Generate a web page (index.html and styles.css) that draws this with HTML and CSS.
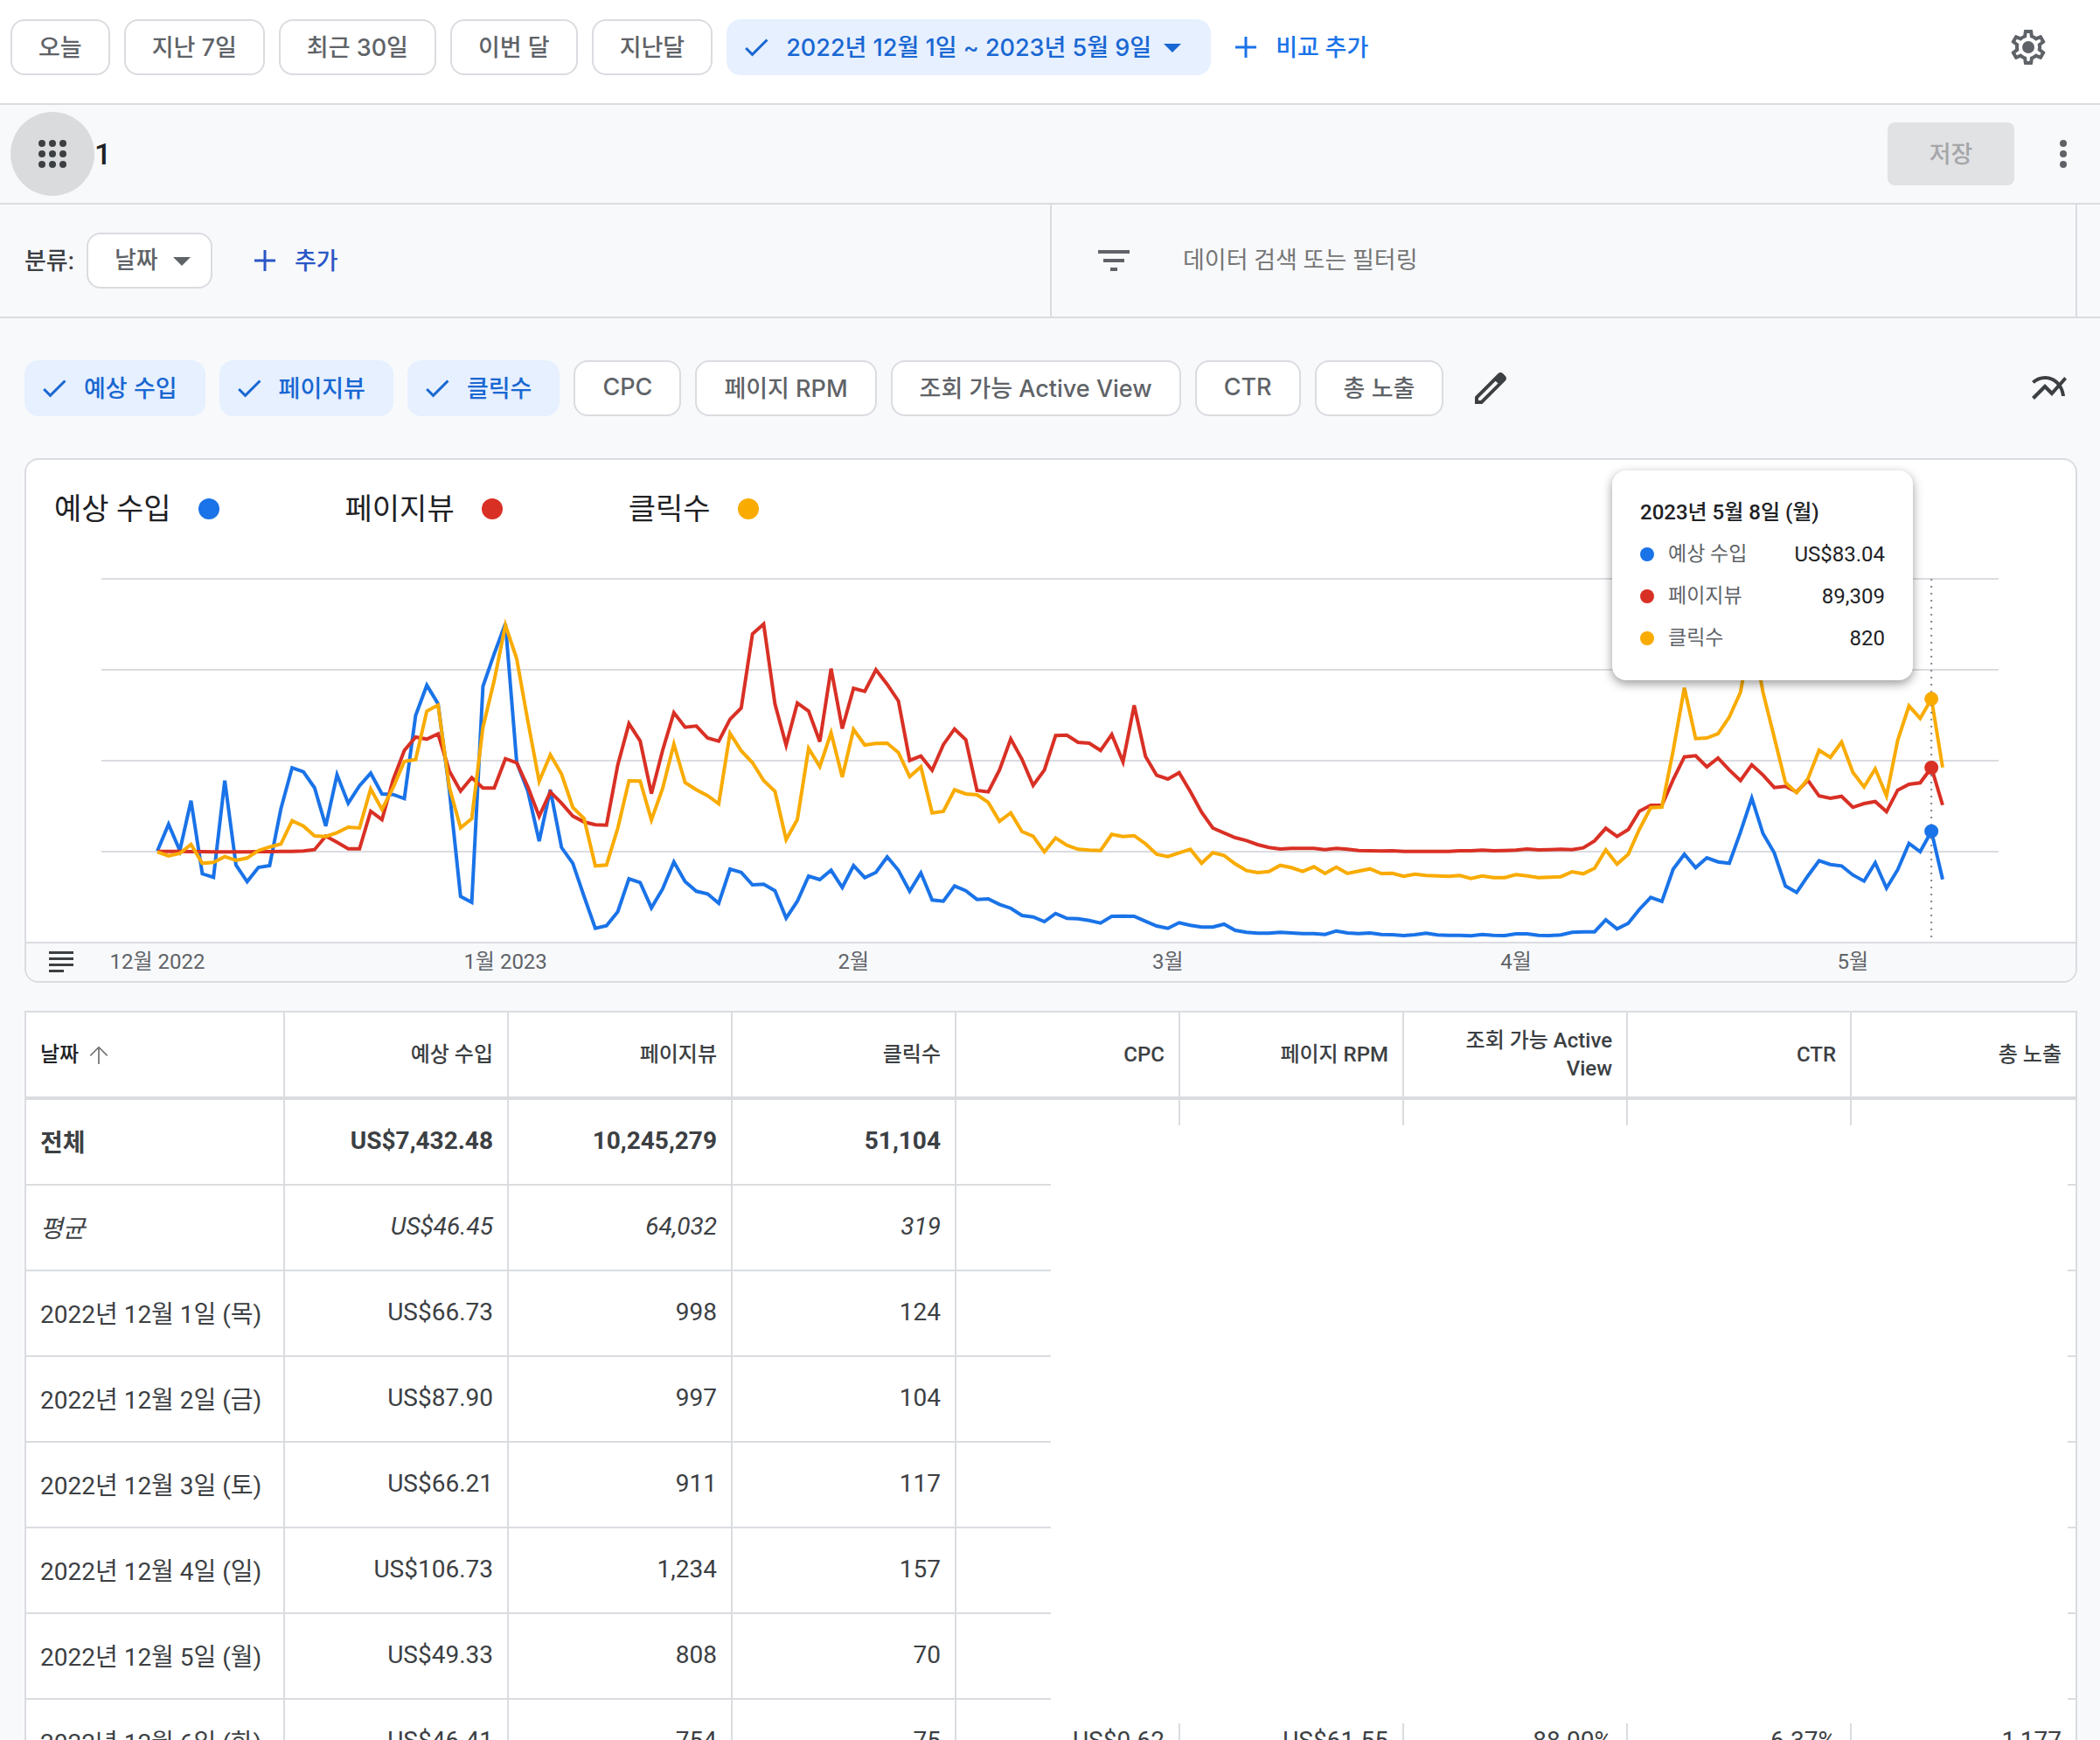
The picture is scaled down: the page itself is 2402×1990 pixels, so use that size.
FILE: index.html
```html
<!DOCTYPE html>
<html lang="ko">
<head>
  <meta charset="utf-8">
  <title>보고서</title>
  <link rel="stylesheet" href="styles.css">
</head>
<body>

  <!-- shared icons -->
  <svg class="icon-defs" aria-hidden="true">
    <symbol id="check" viewBox="0 0 24 24"><path d="M9 16.17L4.83 12l-1.42 1.41L9 19 21 7l-1.41-1.41z"/></symbol>
    <symbol id="drop" viewBox="0 0 24 24"><path d="M7 10l5 5 5-5z"/></symbol>
    <symbol id="plus" viewBox="0 0 24 24"><path d="M10.5 0h3v10.5H24v3H13.5V24h-3V13.5H0v-3h10.5z"/></symbol>
  </svg>

  <header class="date-bar">
    <button class="chip">오늘</button>
    <button class="chip">지난 7일</button>
    <button class="chip">최근 30일</button>
    <button class="chip">이번 달</button>
    <button class="chip">지난달</button>
    <button class="chip selected range" aria-haspopup="dialog">
      <svg class="icon-check"><use href="#check"/></svg>2022년 12월 1일 ~ 2023년 5월 9일<svg class="icon"><use href="#drop"/></svg>
    </button>
    <button class="text-button compare"><svg class="icon-plus"><use href="#plus"/></svg>비교 추가</button>
    <button class="icon-button push" aria-label="설정">
      <svg class="icon" viewBox="0 0 24 24"><path d="M19.43 12.98c.04-.32.07-.64.07-.98 0-.34-.03-.66-.07-.98l2.11-1.65c.19-.15.24-.42.12-.64l-2-3.46c-.09-.16-.26-.25-.44-.25-.06 0-.12.01-.17.03l-2.49 1c-.52-.4-1.08-.73-1.69-.98l-.38-2.65C14.46 2.18 14.25 2 14 2h-4c-.25 0-.46.18-.49.42l-.38 2.65c-.61.25-1.17.59-1.69.98l-2.49-1c-.06-.02-.12-.03-.18-.03-.17 0-.34.09-.43.25l-2 3.46c-.13.22-.07.49.12.64l2.11 1.65c-.04.32-.07.65-.07.98 0 .33.03.66.07.98l-2.11 1.65c-.19.15-.24.42-.12.64l2 3.46c.09.16.26.25.44.25.06 0 .12-.01.17-.03l2.49-1c.52.4 1.08.73 1.69.98l.38 2.65c.03.24.24.42.49.42h4c.25 0 .46-.18.49-.42l.38-2.65c.61-.25 1.17-.59 1.69-.98l2.49 1c.06.02.12.03.18.03.17 0 .34-.09.43-.25l2-3.46c.12-.22.07-.49-.12-.64l-2.11-1.65zm-1.98-1.71c.04.31.05.52.05.73 0 .21-.02.43-.05.73l-.14 1.13.89.7 1.08.84-.7 1.21-1.27-.51-1.04-.42-.9.68c-.43.32-.84.56-1.25.73l-1.06.43-.16 1.13-.2 1.35h-1.4l-.19-1.35-.16-1.13-1.06-.43c-.43-.18-.83-.41-1.23-.71l-.91-.7-1.06.43-1.27.51-.7-1.21 1.08-.84.89-.7-.14-1.13c-.03-.31-.05-.54-.05-.74s.02-.43.05-.73l.14-1.13-.89-.7-1.08-.84.7-1.21 1.27.51 1.04.42.9-.68c.43-.32.84-.56 1.25-.73l1.06-.43.16-1.13.2-1.35h1.39l.19 1.35.16 1.13 1.06.43c.43.18.83.41 1.23.71l.91.7 1.06-.43 1.27-.51.7 1.21-1.07.85-.89.7.14 1.13z"/><circle cx="12" cy="12" r="3.5"/></svg>
    </button>
  </header>

  <div class="title-bar">
    <button class="apps-button" aria-label="보고서 목록">
      <svg class="icon" viewBox="0 0 24 24">
        <circle cx="6" cy="6" r="2"/><circle cx="12" cy="6" r="2"/><circle cx="18" cy="6" r="2"/>
        <circle cx="6" cy="12" r="2"/><circle cx="12" cy="12" r="2"/><circle cx="18" cy="12" r="2"/>
        <circle cx="6" cy="18" r="2"/><circle cx="12" cy="18" r="2"/><circle cx="18" cy="18" r="2"/>
      </svg>
    </button>
    <h1>1</h1>
    <button class="save-button push" disabled>저장</button>
    <button class="icon-button" aria-label="더보기">
      <svg class="icon" viewBox="0 0 24 24"><circle cx="12" cy="6" r="2"/><circle cx="12" cy="12" r="2"/><circle cx="12" cy="18" r="2"/></svg>
    </button>
  </div>

  <div class="filter-bar">
    <div class="breakdown">
      <label for="breakdown">분류:</label>
      <div class="select">
        <select id="breakdown" class="chip"><option>날짜</option></select>
        <svg class="icon"><use href="#drop"/></svg>
      </div>
      <button class="text-button add"><svg class="icon-plus"><use href="#plus"/></svg>추가</button>
    </div>
    <div class="search">
      <svg class="icon" viewBox="0 0 24 24"><path d="M10 18h4v-2h-4v2zM3 6v2h18V6H3zm3 7h12v-2H6v2z"/></svg>
      <input type="text" aria-label="데이터 검색 또는 필터링" placeholder="데이터 검색 또는 필터링">
    </div>
  </div>

  <main>
    <div class="metrics">
      <button class="chip selected" aria-pressed="true"><svg class="icon-check"><use href="#check"/></svg>예상 수입</button>
      <button class="chip selected" aria-pressed="true"><svg class="icon-check"><use href="#check"/></svg>페이지뷰</button>
      <button class="chip selected" aria-pressed="true"><svg class="icon-check"><use href="#check"/></svg>클릭수</button>
      <button class="chip">CPC</button>
      <button class="chip">페이지 RPM</button>
      <button class="chip">조회 가능 Active View</button>
      <button class="chip">CTR</button>
      <button class="chip">총 노출</button>
      <button class="icon-button edit" aria-label="측정항목 수정">
        <svg class="icon" viewBox="0 0 24 24"><path d="M20.41 4.94l-1.35-1.35c-.78-.78-2.05-.78-2.83 0L3 16.82V21h4.18L20.41 7.77c.79-.78.79-2.05 0-2.83zm-14 14.12L5 19v-1.36l9.82-9.82 1.41 1.41-9.82 9.83z"/></svg>
      </button>
      <button class="icon-button push" aria-label="차트 유형">
        <svg class="icon" viewBox="0 0 24 24"><path d="M22 6.92l-1.41-1.41-2.85 3.21C15.68 6.4 12.83 5 9.61 5 6.72 5 4.07 6.16 2 8l1.42 1.42C5.12 7.93 7.27 7 9.61 7c2.74 0 5.09 1.26 6.77 3.24l-2.88 3.24-4-4L2 16.99l1.5 1.5 6-6.01 4 4 4.05-4.55c.75 1.35 1.25 2.9 1.44 4.55H21c-.22-2.3-.95-4.39-2.04-6.14L22 6.92z"/></svg>
      </button>
    </div>

    <section class="chart-card">
      <div class="legend">
        <span>예상 수입<i class="dot blue"></i></span>
        <span>페이지뷰<i class="dot red"></i></span>
        <span>클릭수<i class="dot yellow"></i></span>
      </div>
      <svg id="chart"></svg>
      <button class="notes-button" aria-label="메모">
        <svg width="28" height="24" viewBox="0 0 28 24"><path d="M0 0h28v3H0zM0 7h28v3H0zM0 14h28v3H0zM0 21h17v3H0z"/></svg>
      </button>
      <div class="tooltip">
        <strong>2023년 5월 8일 (월)</strong>
        <p><i class="dot blue"></i>예상 수입<b>US$83.04</b></p>
        <p><i class="dot red"></i>페이지뷰<b>89,309</b></p>
        <p><i class="dot yellow"></i>클릭수<b>820</b></p>
      </div>
    </section>

    <div class="table-wrap">
      <table>
        <thead>
          <tr>
            <th>날짜<svg class="icon-sort" viewBox="0 0 24 24"><path d="M4.7 12.7l-.9-.9L12 3.600l8.200 8.200-.9.9-6.600-6.600V20h-1.400V6.100z"/></svg></th>
            <th>예상 수입</th>
            <th>페이지뷰</th>
            <th>클릭수</th>
            <th>CPC</th>
            <th>페이지 RPM</th>
            <th>조회 가능 Active View</th>
            <th>CTR</th>
            <th>총 노출</th>
          </tr>
        </thead>
        <tbody>
          <tr class="total"><td>전체</td><td>US$7,432.48</td><td>10,245,279</td><td>51,104</td><td></td><td></td><td></td><td></td><td></td></tr>
          <tr class="average"><td>평균</td><td>US$46.45</td><td>64,032</td><td>319</td><td></td><td></td><td></td><td></td><td></td></tr>
          <tr><td>2022년 12월 1일 (목)</td><td>US$66.73</td><td>998</td><td>124</td><td></td><td></td><td></td><td></td><td></td></tr>
          <tr><td>2022년 12월 2일 (금)</td><td>US$87.90</td><td>997</td><td>104</td><td></td><td></td><td></td><td></td><td></td></tr>
          <tr><td>2022년 12월 3일 (토)</td><td>US$66.21</td><td>911</td><td>117</td><td></td><td></td><td></td><td></td><td></td></tr>
          <tr><td>2022년 12월 4일 (일)</td><td>US$106.73</td><td>1,234</td><td>157</td><td></td><td></td><td></td><td></td><td></td></tr>
          <tr><td>2022년 12월 5일 (월)</td><td>US$49.33</td><td>808</td><td>70</td><td></td><td></td><td></td><td></td><td></td></tr>
          <tr><td>2022년 12월 6일 (화)</td><td>US$46.41</td><td>754</td><td>75</td><td>US$0.62</td><td>US$61.55</td><td>88.00%</td><td>6.37%</td><td>1,177</td></tr>
        </tbody>
      </table>
      <div class="table-mask"></div>
    </div>
  </main>

  <script>
    // one value per day, measured down from the top of the chart, 3 units to a pixel
    const series = [
      {
        color: '#1a73e8',
        data: [
          1000, 908, 998, 827, 1078, 1090, 758, 1048, 1105, 1056, 1050, 855, 714, 728, 783, 914,
          738, 836, 776, 733, 804, 806, 820, 535, 431, 495, 790, 1156, 1176, 435, 323,
          220, 695, 795, 966, 790, 988, 1042, 1155, 1265, 1256, 1208, 1095, 1108, 1195, 1130, 1037,
          1105, 1138, 1147, 1179, 1062, 1073, 1116, 1114, 1136, 1230, 1172, 1086, 1098, 1066, 1125,
          1050, 1091, 1073, 1020, 1066, 1138, 1075, 1168, 1172, 1120, 1136, 1166, 1164, 1183, 1196,
          1221, 1226, 1242, 1214, 1231, 1232, 1238, 1247, 1224, 1223, 1224, 1241, 1257,
          1265, 1246, 1255, 1261, 1261, 1251, 1272, 1279, 1282, 1282, 1279, 1281, 1283, 1283, 1286,
          1274, 1281, 1283, 1281, 1286, 1287, 1290, 1287, 1282, 1288, 1289, 1289, 1291, 1286, 1289, 1290,
          1284, 1284, 1289, 1290, 1288, 1279, 1277, 1277, 1236, 1267, 1248, 1200, 1159, 1173, 1062,
          1011, 1057, 1023, 1037, 1042, 935, 818, 940, 1006, 1120, 1142, 1085, 1033, 1046, 1051,
          1082, 1103, 1040, 1127, 1064, 974, 1002, 932, 1097
        ]
      },
      {
        color: '#d93025',
        data: [
          1001, 1001, 1001, 1002, 1002, 1003, 1003, 1003, 1003, 1002, 1002, 1001, 1001, 1000, 995, 949,
          970, 992, 992, 863, 892, 755, 655, 609, 616, 598, 725, 794, 748, 784, 784,
          683, 697, 780, 881, 797, 836, 880, 900, 910, 911, 705, 563, 622, 803, 655, 525,
          575, 571, 612, 623, 548, 509, 255, 221, 495, 637, 492, 520, 625, 374, 580,
          442, 452, 378, 428, 485, 689, 674, 723, 635, 581, 618, 792, 797, 722, 615,
          685, 775, 722, 604, 602, 627, 630, 655, 600, 694, 500, 675, 740,
          753, 731, 796, 867, 921, 938, 954, 964, 978, 988, 993, 991, 991, 991, 995,
          991, 994, 998, 999, 1000, 999, 1001, 1001, 1001, 1001, 1001, 999, 999, 997, 999, 998,
          997, 993, 996, 995, 994, 995, 989, 965, 922, 950, 926, 863, 843, 843, 755,
          677, 673, 711, 681, 722, 758, 704, 739, 782, 778, 797, 757, 811, 819, 812,
          850, 837, 830, 865, 791, 771, 766, 714, 842
        ]
      },
      {
        color: '#f9ab00',
        data: [
          1003, 1017, 1008, 977, 1042, 1039, 1019, 1032, 1024, 998, 986, 976, 896, 914, 948, 950,
          937, 918, 921, 787, 857, 782, 692, 686, 520, 499, 780, 920, 889, 575, 415,
          225, 340, 555, 761, 670, 736, 850, 888, 1051, 1048, 922, 759, 760, 893, 785, 633,
          765, 790, 810, 838, 596, 656, 697, 758, 795, 961, 892, 648, 710, 594, 746,
          583, 636, 631, 630, 662, 745, 711, 869, 864, 790, 804, 807, 833, 898, 869,
          933, 949, 1003, 955, 980, 994, 997, 998, 943, 950, 947, 975, 1011,
          1019, 1006, 994, 1042, 1006, 1015, 1044, 1067, 1074, 1070, 1049, 1057, 1070, 1054, 1077,
          1055, 1077, 1069, 1061, 1077, 1076, 1087, 1079, 1084, 1085, 1087, 1084, 1094, 1085, 1091, 1091,
          1081, 1085, 1091, 1090, 1088, 1071, 1078, 1059, 996, 1045, 1011, 925, 851, 849, 655,
          440, 614, 612, 597, 540, 455, 240, 455, 610, 765, 800, 752, 654, 679, 626,
          730, 780, 718, 811, 620, 502, 545, 478, 713
        ]
      }
    ];
    const months = [[0, '12월 2022'], [31, '1월 2023'], [62, '2월'], [90, '3월'], [121, '4월'], [151, '5월']];
    const hovered = 158;
    const chart = document.getElementById('chart');

    function drawChart() {
      const width = chart.clientWidth;
      const x = i => 150 + i * (width - 302) / 159;
      let out = `<rect class="axis" y="438" width="${width}" height="44"/>`;

      [22, 126, 230, 334].forEach(y => {
        out += `<line class="grid" x1="86" x2="${width - 88}" y1="${y}" y2="${y}"/>`;
      });
      out += `<line class="grid" x1="0" x2="${width}" y1="438" y2="438"/>`;

      series.forEach(s => {
        const points = s.data.map((v, i) => x(i).toFixed(1) + ',' + (v / 3).toFixed(1)).join(' ');
        out += `<polyline class="line" stroke="${s.color}" points="${points}"/>`;
      });

      out += `<line class="cursor" x1="${x(hovered)}" x2="${x(hovered)}" y1="22" y2="436"/>`;
      series.forEach(s => {
        out += `<circle cx="${x(hovered)}" cy="${s.data[hovered] / 3}" r="8" fill="${s.color}"/>`;
      });

      months.forEach(([day, label]) => {
        out += `<text x="${x(day)}" y="468">${label}</text>`;
      });
      chart.innerHTML = out;
    }

    drawChart();
    window.addEventListener('resize', drawChart);
  </script>

</body>
</html>
```
FILE: styles.css
```css
* {
  box-sizing: border-box;
}

body {
  margin: 0;
  height: 100vh;
  overflow: hidden;
  background: #f8f9fb;
  color: #3c4043;
  font-family: Roboto, "Noto Sans CJK KR", sans-serif;
  font-size: 28px;
}

button,
input,
select {
  font-family: inherit;
}

button {
  border: none;
  background: none;
  padding: 0;
  cursor: pointer;
}

svg {
  fill: currentColor;
  flex-shrink: 0;
}

.icon-defs {
  position: absolute;
  width: 0;
  height: 0;
}

.icon {
  display: block;
  width: 48px;
  height: 48px;
}

.icon-check {
  width: 36px;
  height: 36px;
  margin-right: 16px;
}

.icon-plus {
  width: 24px;
  height: 24px;
}

.push {
  margin-left: auto;
}

/* chips */
.chip {
  display: flex;
  align-items: center;
  height: 64px;
  padding: 0 30px 4px;
  border: 2px solid #dadce0;
  border-radius: 16px;
  background: #fff;
  color: #5f6368;
  font-family: Inter, "Noto Sans CJK KR", sans-serif;
  font-size: 27px;
  font-weight: 500;
  white-space: nowrap;
}

.chip.selected {
  padding: 0 32px 4px 16px;
  border: none;
  background: #e6f0ff;
  color: #1967d2;
}

.chip.selected.range {
  padding-right: 20px;
}

.chip svg,
.text-button svg {
  margin-top: 4px;
}

.text-button {
  display: flex;
  align-items: center;
  gap: 22px;
  height: 64px;
  padding-bottom: 4px;
  font-size: 27px;
  font-weight: 500;
  color: #1a73e8;
}

.icon-button {
  color: #5f6368;
}

/* bars */
.date-bar {
  display: flex;
  align-items: center;
  gap: 16px;
  padding: 22px 58px 32px 12px;
  background: #fff;
  border-bottom: 2px solid #dadce0;
}

.compare {
  margin-left: 12px;
}

.title-bar {
  display: flex;
  align-items: center;
  padding: 8px 18px 8px 12px;
  border-bottom: 2px solid #dadce0;
}

.apps-button {
  display: flex;
  align-items: center;
  justify-content: center;
  width: 96px;
  height: 96px;
  border-radius: 50%;
  background: #dadbdd;
  color: #3c4043;
}

h1 {
  margin: 0;
  color: #202124;
  font-size: 34px;
  font-weight: 500;
}

.save-button {
  width: 145px;
  height: 72px;
  margin-right: 32px;
  padding-bottom: 4px;
  border-radius: 8px;
  background: #e1e2e4;
  color: #a5a6a8;
  font-size: 27px;
  font-weight: 500;
}

.filter-bar {
  display: flex;
  height: 130px;
  padding-right: 26px;
  border-bottom: 2px solid #dadce0;
}

.breakdown {
  display: flex;
  align-items: center;
  flex: 0 0 50vw;
  padding-left: 28px;
  font-size: 27px;
}

.breakdown label {
  width: 71px;
  padding-bottom: 4px;
  font-weight: 500;
}

.select {
  position: relative;
}

.select .chip {
  width: 144px;
  padding-bottom: 2px;
  appearance: none;
}

.select .icon {
  position: absolute;
  top: 8px;
  right: 11px;
  color: #5f6368;
  pointer-events: none;
}

.add {
  margin-left: 48px;
  color: #2a56c6;
}

.search {
  display: flex;
  align-items: center;
  flex: 1;
  padding-left: 47px;
  border-left: 2px solid #dadce0;
  border-right: 2px solid #dadce0;
  color: #5f6368;
}

.search input {
  flex: 1;
  margin-left: 55px;
  padding: 0;
  border: none;
  outline: none;
  background: none;
  font-size: 27px;
}

.search input::placeholder {
  color: #757575;
}

main {
  padding: 48px 26px 0 28px;
}

.metrics {
  display: flex;
  align-items: center;
  gap: 16px;
  padding-right: 8px;
}

.metrics .chip:not(.selected) {
  padding: 0 31px 4px;
}

.metrics .icon-button {
  color: #3c4043;
}

.metrics .edit {
  margin-left: 14px;
}

/* chart */
.chart-card {
  position: relative;
  margin-top: 48px;
  border: 2px solid #dadce0;
  border-radius: 16px;
  background: #fff;
}

.legend {
  display: flex;
  align-items: flex-start;
  gap: 144px;
  height: 114px;
  padding: 32px 32px 0;
  color: #202124;
  font-size: 34px;
  line-height: 48px;
}

.legend span {
  display: flex;
  align-items: center;
}

.legend .dot {
  width: 24px;
  height: 24px;
  margin-left: 31px;
}

.dot {
  border-radius: 50%;
}

.blue {
  background: #1a73e8;
}

.red {
  background: #d93025;
}

.yellow {
  background: #f9ab00;
}

#chart {
  display: block;
  width: 100%;
  height: 482px;
  border-radius: 0 0 14px 14px;
}

#chart .axis {
  fill: #f8f9fb;
}

#chart .grid {
  stroke: #dadce0;
  stroke-width: 2;
}

#chart .line {
  fill: none;
  stroke-width: 4;
}

#chart .cursor {
  stroke: #80868b;
  stroke-width: 2;
  stroke-dasharray: 2 6;
}

#chart text {
  fill: #5f6368;
  font-size: 24px;
  text-anchor: middle;
}

.notes-button {
  position: absolute;
  left: 26px;
  bottom: 10px;
  color: #3c4043;
}

.notes-button svg {
  display: block;
}

.tooltip {
  position: absolute;
  top: 12px;
  right: 186px;
  width: 344px;
  height: 240px;
  padding: 24px 32px;
  border-radius: 16px;
  background: #fff;
  box-shadow: 0 4px 12px rgba(0, 0, 0, 0.4);
  color: #202124;
  font-size: 24px;
}

.tooltip strong {
  display: block;
  line-height: 48px;
  font-weight: 500;
}

.tooltip p {
  display: flex;
  align-items: center;
  margin: 0;
  line-height: 48px;
  color: #5f6368;
  font-size: 23px;
}

.tooltip .dot {
  width: 16px;
  height: 16px;
  margin-right: 16px;
}

.tooltip b {
  margin-left: auto;
  color: #202124;
  font-size: 24px;
  font-weight: 400;
}

/* table */
.table-wrap {
  position: relative;
  margin-top: 32px;
  border: 2px solid #dadce0;
  background: #fff;
}

table {
  width: 100%;
  table-layout: fixed;
  border-collapse: separate;
  border-spacing: 0;
}

th,
td {
  padding: 0 16px;
  border-right: 2px solid #dadce0;
  border-bottom: 2px solid #dadce0;
  text-align: right;
}

th:last-child,
td:last-child {
  border-right: none;
}

th:first-child,
td:first-child {
  width: 296px;
  text-align: left;
  white-space: nowrap;
}

th {
  height: 100px;
  border-bottom-width: 4px;
  font-size: 24px;
  font-weight: 500;
  line-height: 32px;
}

th:first-child {
  color: #202124;
}

td {
  height: 98px;
  padding-bottom: 3px;
}

.icon-sort {
  width: 30px;
  height: 30px;
  margin-left: 8px;
  color: #757575;
  vertical-align: middle;
}

.total td {
  font-weight: 700;
}

.average td {
  font-style: italic;
}

.table-mask {
  position: absolute;
  top: 129px;
  left: 50%;
  right: 9px;
  height: 684px;
  background: #fff;
}
```
